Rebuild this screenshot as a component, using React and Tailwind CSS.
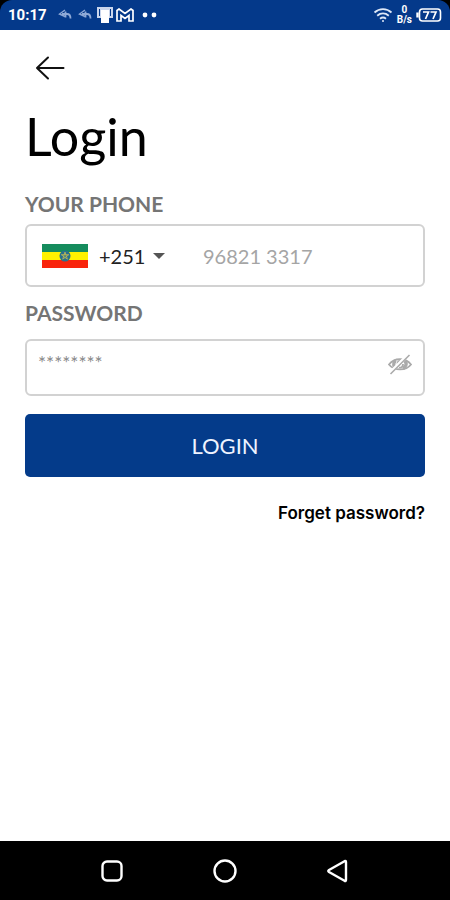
import { useState } from 'react';

function ReplyIcon() {
  return (
    <svg viewBox="0 0 14 12" className="w-[14px] h-3" fill="none" stroke="#8fa9d6" strokeWidth="1.4">
      <path d="M7 1 1.5 5 7 7.500" />
      <path d="M4 5h5c2 0 3.500 1.500 3.500 4.500M7.500 2.500v6" strokeWidth="1.8" />
    </svg>
  );
}

function StatusBar() {
  return (
    <div className="bg-black">
      <header className="flex h-[30px] items-center justify-between rounded-t-xl bg-[#04398a] px-2 text-white">
        <div className="flex items-center">
          <span className="w-[50px] font-['Roboto',sans-serif] text-[15px] font-bold">10:17</span>
          <div className="flex items-center gap-[6px]">
            <ReplyIcon />
            <ReplyIcon />
          </div>
          <svg viewBox="0 0 18 18" className="ml-1 h-[18px] w-[18px]">
            <path d="M1 1h16v11H1z" fill="#c9d5ec" />
            <path d="M3.500 3v7M14.500 3v7" stroke="#04398a" strokeWidth="1" />
            <path d="M5 4h8v13H5z" fill="#fff" />
          </svg>
          <svg viewBox="0 0 18 14" className="ml-[2px] h-[14px] w-[18px]" fill="none" stroke="#fff">
            <path d="M1 2.500 3 1l6 4.500L15 1l2 1.500V13h-4V7.500L9 10.500 5 7.500V13H1z" strokeWidth="1.700" />
          </svg>
          <svg viewBox="0 0 16 6" className="ml-2 h-[6px] w-4" fill="#fff">
            <circle cx="3" cy="3" r="2.400" />
            <circle cx="12" cy="3" r="2.400" />
          </svg>
        </div>
        <div className="flex items-center gap-1">
          <svg viewBox="0 0 20 16" className="h-4 w-5" fill="none" stroke="#dfe8f7" strokeWidth="1.800">
            <path d="M1.500 5.500c5-4.500 12-4.500 17 0M4.200 8.700c3.500-3 8.100-3 11.600 0M7 11.700c2-1.600 4-1.600 6 0" />
            <circle cx="10" cy="14" r="1" fill="#dfe8f7" stroke="none" />
          </svg>
          <div className="flex flex-col items-center font-['Roboto',sans-serif] text-[10px] font-bold leading-[10px]">
            <span>0</span>
            <span>B/s</span>
          </div>
          <svg viewBox="0 0 26 14" className="h-[14px] w-[26px]" fill="none" stroke="#fff">
            <rect x="3.500" y="1" width="21" height="12" rx="3" strokeWidth="1.600" />
            <path d="M1.500 4.500v5" strokeWidth="2.400" />
            <path d="M7 4h5.500L9.500 11M14.500 4H20l-3 7" strokeWidth="1.700" />
          </svg>
        </div>
      </header>
    </div>
  );
}

function EthiopiaFlag() {
  return (
    <svg viewBox="0 0 46 24" className="h-6 w-[46px] shrink-0">
      <path fill="#158c5d" d="M0 0h46v8H0z" />
      <path fill="#fff200" d="M0 8h46v8H0z" />
      <path fill="#f9240c" d="M0 16h46v8H0z" />
      <circle cx="23" cy="12" r="5.500" fill="#29708e" />
      <path
        d="m23 8 2.400 7.200-6.100-4.500h7.500l-6.100 4.500z"
        fill="none"
        stroke="#c3bd51"
        strokeWidth=".8"
      />
    </svg>
  );
}

function EyeOffIcon() {
  return (
    <svg viewBox="0 0 24 22" className="h-[22px] w-6" fill="none" stroke="#aaa">
      <path d="M1 11.500C6 4.500 18 4.500 23 11.500 18 18 6 18 1 11.500z" strokeWidth="1.800" />
      <path d="M7.500 7.500c-3 3-2 6 1 8M16.500 7.500c3 3 1.500 6-1.500 8" strokeWidth="3.400" />
      <path d="M9.500 11a3 3 0 0 1 3-3M11 14.500a3.200 3.200 0 0 0 4-3.500" strokeWidth="1.800" />
      <path d="M2 20 21 1" stroke="#fff" strokeWidth="3.500" />
      <path d="M2.500 21 21.500 2" strokeWidth="1.600" />
    </svg>
  );
}

function NavBar() {
  return (
    <nav className="flex h-[59px] items-center justify-center gap-[89px] bg-black text-white">
      <button type="button" aria-label="Recent apps">
        <svg viewBox="0 0 24 24" className="h-6 w-6" fill="none" stroke="currentColor" strokeWidth="2.400">
          <rect x="2.500" y="2.500" width="19" height="19" rx="4.500" />
        </svg>
      </button>
      <button type="button" aria-label="Home">
        <svg viewBox="0 0 24 24" className="h-6 w-6" fill="none" stroke="currentColor" strokeWidth="2.400">
          <circle cx="12" cy="12" r="10.500" />
        </svg>
      </button>
      <button type="button" aria-label="Back">
        <svg viewBox="0 0 24 24" className="h-6 w-6" fill="none" stroke="currentColor" strokeWidth="2.400" strokeLinejoin="round">
          <path d="M18.500 2.200q1.500-.7 1.500 1v17.600q0 1.700-1.500 1L3 13q-1.500-1 0-2z" />
        </svg>
      </button>
    </nav>
  );
}

export default function App() {
  const [phone, setPhone] = useState('');
  const [password, setPassword] = useState('');
  const [visible, setVisible] = useState(false);

  return (
    <div className="flex min-h-screen flex-col bg-white font-['Lato',sans-serif] text-black">
      <StatusBar />

      <main className="flex-1 px-[25px] pt-6">
        <button type="button" aria-label="Go back" className="ml-[10px] block">
          <svg viewBox="0 0 30 28" className="h-7 w-[30px]" fill="none" stroke="#111" strokeWidth="2" strokeLinecap="round" strokeLinejoin="round">
            <path d="M28.500 14H2M13 3.500 2 14l11 10.500" />
          </svg>
        </button>

        <h1 className="mt-6 text-[52px] leading-[60px]">Login</h1>

        <form className="mt-6 flex flex-col" onSubmit={(e) => e.preventDefault()}>
          <label htmlFor="phone" className="text-[21px] font-bold leading-7 text-[#757575]">
            YOUR PHONE
          </label>
          <div className="mt-[6px] flex h-[63px] items-center rounded-md border-2 border-[#d2d2d2] pl-[15px] pr-3 text-[20px]">
            <EthiopiaFlag />
            <div className="relative ml-[11px] w-[70px] shrink-0">
              <select aria-label="Country code" className="w-full appearance-none bg-transparent text-[#222] outline-none">
                <option>+251</option>
              </select>
              <svg viewBox="0 0 12 6" className="pointer-events-none absolute right-1 top-1/2 h-[6px] w-3 -translate-y-1/2" fill="#555">
                <path d="M0 0h12L6 6z" />
              </svg>
            </div>
            <input
              id="phone"
              type="tel"
              placeholder="96821 3317"
              value={phone}
              onChange={(e) => setPhone(e.target.value)}
              className="ml-[34px] min-w-0 flex-1 outline-none placeholder:text-[#a5a5a5]"
            />
          </div>

          <label htmlFor="password" className="mt-3 text-[21px] font-bold leading-7 text-[#757575]">
            PASSWORD
          </label>
          <div className="mt-3 flex h-[57px] items-center rounded-md border-2 border-[#d2d2d2] pb-2 pl-[11px] pr-[11px]">
            <input
              id="password"
              type={visible ? 'text' : 'password'}
              placeholder="********"
              value={password}
              onChange={(e) => setPassword(e.target.value)}
              className="min-w-0 flex-1 text-[19px] outline-none placeholder:text-[#888]"
            />
            <button type="button" aria-label="Show password" onClick={() => setVisible(!visible)}>
              <EyeOffIcon />
            </button>
          </div>

          <button type="submit" className="mt-[18px] h-[63px] rounded-[5px] bg-[#043b8a] text-[22px] text-[#eef3ff]">
            LOGIN
          </button>
        </form>

        <div className="mt-6 text-right">
          <a href="#forgot" className="font-['Inter',sans-serif] text-[17px] font-semibold leading-6">
            Forget password?
          </a>
        </div>
      </main>

      <NavBar />
    </div>
  );
}
